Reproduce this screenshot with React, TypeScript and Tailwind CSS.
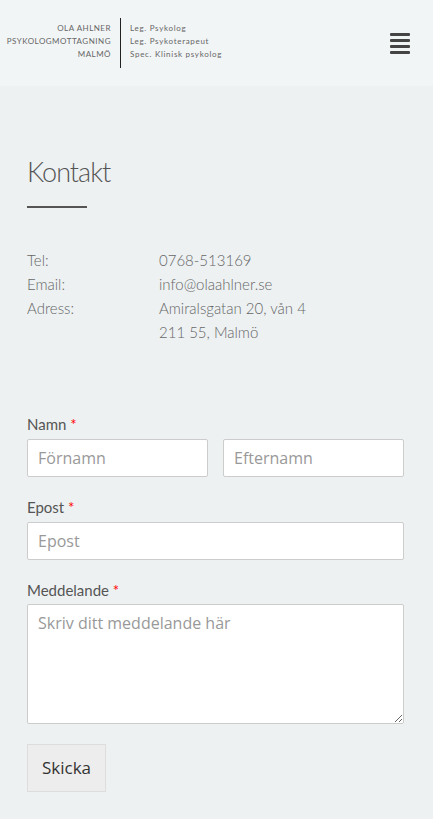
import React from "react";

const futura = { fontFamily: "Lato, 'Noto Sans', sans-serif" };
const sans = { fontFamily: "'Open Sans', 'Noto Sans', sans-serif" };

export default function App() {
  return (
    <div className="min-h-[819px] bg-[#edf1f2]" style={futura}>
      <header className="h-[86px] bg-[#f2f5f6] flex items-center justify-between pl-[6px] pr-[23px]">
        <div className="flex items-center">
          <div className="w-[105px] text-right text-[8px] leading-[13px] tracking-[0.5px] text-[#666] uppercase pb-[3px]">
            <div>Ola Ahlner</div>
            <div>Psykologmottagning</div>
            <div>Malmö</div>
          </div>
          <div className="w-px h-[50px] bg-[#222] mx-[9px] mb-[1px]" />
          <div className="text-[8px] leading-[13px] tracking-[0.7px] text-[#666] pb-[3px]">
            <div>Leg. Psykolog</div>
            <div>Leg. Psykoterapeut</div>
            <div>Spec. Klinisk psykolog</div>
          </div>
        </div>
        <div className="flex flex-col gap-[3px] w-[20px]">
          <div className="h-[3px] bg-[#444] rounded-[1px]" />
          <div className="h-[3px] bg-[#444] rounded-[1px]" />
          <div className="h-[3px] bg-[#444] rounded-[1px]" />
          <div className="h-[3px] bg-[#444] rounded-[1px]" />
        </div>
      </header>

      <main className="pl-[27px] pr-[29px] pt-[68px] pb-[27px]">
        <h1 className="text-[27px] font-light leading-[36px] text-[#555] tracking-[-1px]">Kontakt</h1>
        <div className="w-[60px] h-[2px] bg-[#555] mt-[16px]" />

        <div className="mt-[40px] text-[15px] font-light leading-[24px] text-[#666]">
          <div className="flex">
            <div className="w-[132px]">Tel:</div>
            <div>0768-513169</div>
          </div>
          <div className="flex">
            <div className="w-[132px]">Email:</div>
            <div>info@olaahlner.se</div>
          </div>
          <div className="flex">
            <div className="w-[132px]">Adress:</div>
            <div>
              <div>Amiralsgatan 20, vån 4</div>
              <div>211 55, Malmö</div>
            </div>
          </div>
        </div>

        <form className="mt-[70px]" onSubmit={(e) => e.preventDefault()}>
          <label className="block text-[15px] leading-[20px] text-[#555] mb-[5px]">
            Namn <span className="text-[#f00]">*</span>
          </label>
          <div className="flex gap-[15px]">
            <input
              className="flex-1 min-w-0 h-[38px] bg-white border border-[#ccc] rounded-[2px] px-[10px] text-[16px] placeholder:text-[#999] outline-none"
              style={sans}
              placeholder="Förnamn"
            />
            <input
              className="flex-1 min-w-0 h-[38px] bg-white border border-[#ccc] rounded-[2px] px-[10px] text-[16px] placeholder:text-[#999] outline-none"
              style={sans}
              placeholder="Efternamn"
            />
          </div>

          <label className="block text-[15px] leading-[20px] text-[#555] mt-[20px] mb-[5px]">
            Epost <span className="text-[#f00]">*</span>
          </label>
          <input
            className="block w-full h-[38px] bg-white border border-[#ccc] rounded-[2px] px-[10px] text-[16px] placeholder:text-[#999] outline-none"
            style={sans}
            placeholder="Epost"
          />

          <label className="block text-[15px] leading-[20px] text-[#555] mt-[20px] mb-[4px]">
            Meddelande <span className="text-[#f00]">*</span>
          </label>
          <textarea
            className="block w-full h-[120px] bg-white border border-[#ccc] rounded-[2px] px-[10px] py-[6px] text-[16px] placeholder:text-[#999] outline-none"
            style={sans}
            placeholder="Skriv ditt meddelande här"
          />

          <button
            type="submit"
            className="mt-[20px] h-[48px] w-[79px] bg-[#eeeded] border border-[#ddd] text-[17px] text-[#333]"
            style={sans}
          >
            Skicka
          </button>
        </form>
      </main>
    </div>
  );
}
